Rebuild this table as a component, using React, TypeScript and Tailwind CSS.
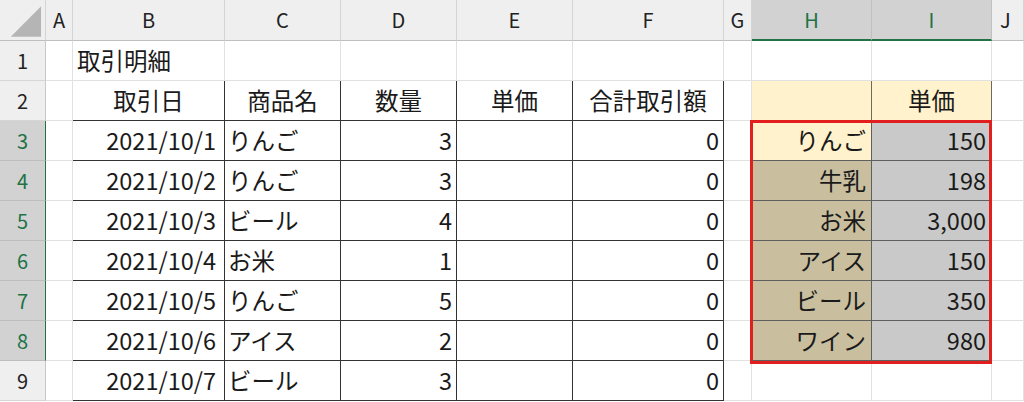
import React from "react";

const base = "box-border flex items-center overflow-hidden whitespace-nowrap leading-none border-r border-b";
const grid = "border-r-[#e1e1e1] border-b-[#e1e1e1] bg-white";
const colHead = "justify-center bg-[#efefef] border-r-[#d4d4d4] border-b-[#bfbfbf] text-[20px] text-[#222]";
const colHeadSel = "justify-center bg-[#d2d2d2] border-r-[#c0c0c0] border-b-2 border-b-[#217346] text-[20px] text-[#217346]";
const rowHead = "justify-center bg-[#efefef] border-r-[#c8c8c8] border-b-[#d6d6d6] text-[20px] text-[#222]";
const rowHeadSel = "justify-center bg-[#d2d2d2] border-r-[#217346] border-b-[#bdbdbd] text-[20px] text-[#217346]";

type Row = { n: number; date: string; item: string; qty: string };

const rows: Row[] = [
  { n: 3, date: "2021/10/1", item: "りんご", qty: "3" },
  { n: 4, date: "2021/10/2", item: "りんご", qty: "3" },
  { n: 5, date: "2021/10/3", item: "ビール", qty: "4" },
  { n: 6, date: "2021/10/4", item: "お米", qty: "1" },
  { n: 7, date: "2021/10/5", item: "りんご", qty: "5" },
  { n: 8, date: "2021/10/6", item: "アイス", qty: "2" },
  { n: 9, date: "2021/10/7", item: "ビール", qty: "3" },
];

const lookup: Record<number, [string, string]> = {
  3: ["りんご", "150"],
  4: ["牛乳", "198"],
  5: ["お米", "3,000"],
  6: ["アイス", "150"],
  7: ["ビール", "350"],
  8: ["ワイン", "980"],
};

const tbl = "border-r-[#333333] border-b-[#333333] bg-white";
const gridTpl = "grid grid-cols-[46px_27px_152px_116px_116px_116px_151px_28px_120px_120px_1fr] grid-rows-[41px_repeat(9,40px)]";

export default function App() {
  return (
    <div className="w-[1024px] h-[402px] overflow-hidden bg-white font-['Noto_Sans_CJK_JP',sans-serif] font-normal text-[23.5px] text-[#1a1a1a]">
      <div className="relative">
        <div className={gridTpl}>
          {/* Column header row */}
          <div className={`${base} ${colHead} border-r-[#c8c8c8]`}>
            <svg width="46" height="40" viewBox="0 0 46 40">
              <polygon points="42,6 42,37 11,37" fill="#b5b5b5" />
            </svg>
          </div>
          <div className={`${base} ${colHead}`}>A</div>
          <div className={`${base} ${colHead}`}>B</div>
          <div className={`${base} ${colHead}`}>C</div>
          <div className={`${base} ${colHead}`}>D</div>
          <div className={`${base} ${colHead}`}>E</div>
          <div className={`${base} ${colHead}`}>F</div>
          <div className={`${base} ${colHead}`}>G</div>
          <div className={`${base} ${colHeadSel}`}>H</div>
          <div className={`${base} ${colHeadSel}`}>I</div>
          <div className={`${base} ${colHead} justify-start pl-[8px]`}>J</div>

          {/* Row 1 */}
          <div className={`${base} ${rowHead}`}>1</div>
          <div className={`${base} ${grid}`}></div>
          <div className={`${base} ${grid} border-b-[#333333] pl-[4px]`}>取引明細</div>
          <div className={`${base} ${grid} border-b-[#333333]`}></div>
          <div className={`${base} ${grid} border-b-[#333333]`}></div>
          <div className={`${base} ${grid} border-b-[#333333]`}></div>
          <div className={`${base} ${grid} border-b-[#333333]`}></div>
          <div className={`${base} ${grid}`}></div>
          <div className={`${base} ${grid} border-b-[#6f6a60]`}></div>
          <div className={`${base} ${grid} border-b-[#6f6a60]`}></div>
          <div className={`${base} ${grid}`}></div>

          {/* Row 2 */}
          <div className={`${base} ${rowHead}`}>2</div>
          <div className={`${base} ${grid} border-r-[#333333]`}></div>
          <div className={`${base} ${tbl} bg-[#ddebf7] justify-center`}>取引日</div>
          <div className={`${base} ${tbl} bg-[#ddebf7] justify-center`}>商品名</div>
          <div className={`${base} ${tbl} bg-[#ddebf7] justify-center`}>数量</div>
          <div className={`${base} ${tbl} bg-[#ddebf7] justify-center`}>単価</div>
          <div className={`${base} ${tbl} bg-[#ddebf7] justify-center`}>合計取引額</div>
          <div className={`${base} ${grid} border-r-[#6f6a60]`}></div>
          <div className={`${base} border-r-[#6f6a60] border-b-[#6f6a60] bg-[#fff2cc]`}></div>
          <div className={`${base} border-r-[#6f6a60] border-b-[#6f6a60] bg-[#fff2cc] justify-center`}>単価</div>
          <div className={`${base} ${grid}`}></div>

          {rows.map((r) => {
            const sel = r.n <= 8;
            const lk = lookup[r.n];
            return (
              <React.Fragment key={r.n}>
                <div className={`${base} ${sel ? rowHeadSel : rowHead}`}>{r.n}</div>
                <div className={`${base} ${grid} border-r-[#333333]`}></div>
                <div className={`${base} ${tbl} justify-end pr-[8px]`}>{r.date}</div>
                <div className={`${base} ${tbl} justify-start pl-[3px]`}>{r.item}</div>
                <div className={`${base} ${tbl} justify-end pr-[4px]`}>{r.qty}</div>
                <div className={`${base} ${tbl}`}></div>
                <div className={`${base} ${tbl} justify-end pr-[4px]`}>0</div>
                <div className={`${base} ${grid} ${sel ? "border-r-[#5f5f5f]" : ""}`}></div>
                {lk ? (
                  <>
                    <div
                      className={`${base} border-r-[#5f5f5f] border-b-[#5f5f5f] justify-end pr-[5px] ${
                        r.n === 3 ? "bg-[#fff2cc]" : "bg-[#c9bf9f]"
                      }`}
                    >
                      {lk[0]}
                    </div>
                    <div className={`${base} border-r-[#5f5f5f] border-b-[#5f5f5f] bg-[#c9c9c9] justify-end pr-[5px]`}>
                      {lk[1]}
                    </div>
                  </>
                ) : (
                  <>
                    <div className={`${base} ${grid}`}></div>
                    <div className={`${base} ${grid}`}></div>
                  </>
                )}
                <div className={`${base} ${grid}`}></div>
              </React.Fragment>
            );
          })}
        </div>

        {/* Red border overlay around H3:I8 */}
        <div className={`pointer-events-none absolute inset-0 ${gridTpl}`}>
          <div className="col-start-9 col-end-11 row-start-4 row-end-10 ml-[-2px] mt-[-1px] mb-[-3px] box-border border-[3px] border-[#e21f1f]"></div>
        </div>
      </div>
    </div>
  );
}
